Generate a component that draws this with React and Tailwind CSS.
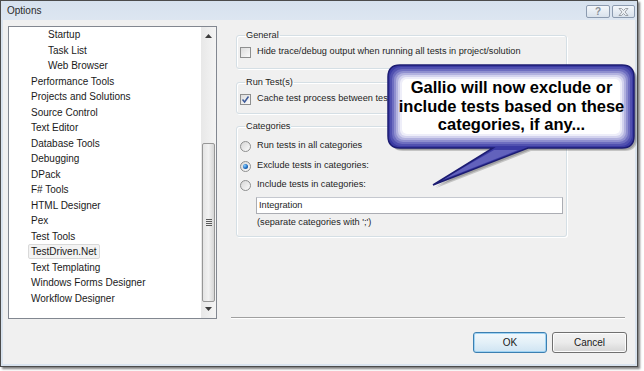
import React from 'react'

const treeItems = [
  { label: 'Startup', level: 2 },
  { label: 'Task List', level: 2 },
  { label: 'Web Browser', level: 2 },
  { label: 'Performance Tools', level: 1 },
  { label: 'Projects and Solutions', level: 1 },
  { label: 'Source Control', level: 1 },
  { label: 'Text Editor', level: 1 },
  { label: 'Database Tools', level: 1 },
  { label: 'Debugging', level: 1 },
  { label: 'DPack', level: 1 },
  { label: 'F# Tools', level: 1 },
  { label: 'HTML Designer', level: 1 },
  { label: 'Pex', level: 1 },
  { label: 'Test Tools', level: 1 },
  { label: 'TestDriven.Net', level: 1, selected: true },
  { label: 'Text Templating', level: 1 },
  { label: 'Windows Forms Designer', level: 1 },
  { label: 'Workflow Designer', level: 1 },
]

// inner glow rings of the callout, from the blue edge to the white middle
const glowRings = [
  { i: 2, c: '#5151b0' },
  { i: 4, c: '#6e6ec0' },
  { i: 6, c: '#8f8fcf' },
  { i: 8, c: '#b2b2df' },
  { i: 10, c: '#d3d3ee' },
  { i: 12, c: '#eeeef9' },
  { i: 14, c: '#ffffff' },
]

function Checkbox({ checked }) {
  return (
    <div className="w-[11px] h-[11px] border border-[#8e8f8f] bg-gradient-to-br from-[#dcdcdc] to-[#fbfbfb] flex items-center justify-center shrink-0">
      {checked && (
        <svg width="9" height="9" viewBox="0 0 9 9">
          <path d="M1.5 4.5 L3.6 7 L7.5 1.5" fill="none" stroke="#3c5a9a" strokeWidth="1.5" />
        </svg>
      )}
    </div>
  )
}

function Radio({ checked }) {
  return (
    <div className="w-[11px] h-[11px] rounded-full border border-[#8e8f8f] bg-gradient-to-br from-[#d6d6d6] to-[#fcfcfc] flex items-center justify-center shrink-0">
      {checked && (
        <div className="w-[5px] h-[5px] rounded-full bg-[radial-gradient(circle_at_35%_35%,#8ad0ff_0%,#1c6ac0_55%,#0f3f7e_100%)]" />
      )}
    </div>
  )
}

function Group({ title, className, children }) {
  return (
    <fieldset className={`border border-[#d5dfe5] rounded-[3px] shadow-[inset_1px_1px_0_#ffffff,1px_1px_0_#ffffff] ${className}`}>
      <legend className="ml-[5px] px-[1px] text-[9.2px] leading-[12px] text-[#1e1e1e]">{title}</legend>
      {children}
    </fieldset>
  )
}

function Callout() {
  const d = 'M20 5 H242 Q254 5 254 17 V76 Q254 88 242 88 H148 L53 125 L113 88 H20 Q8 88 8 76 V17 Q8 5 20 5 Z'
  return (
    <div className="absolute left-[380px] top-[60px] w-[264px] h-[135px]">
      <svg width="264" height="135" viewBox="0 0 264 135" className="absolute left-0 top-0">
        <path d={d} transform="translate(3 3)" fill="#000000" opacity="0.18" />
        <path d={d} transform="translate(2 2)" fill="#000000" opacity="0.18" />
        <path d={d} fill="#3b3ba4" />
        {glowRings.map(({ i, c }) => (
          <rect
            key={i}
            x={8 + i}
            y={5 + i}
            width={246 - 2 * i}
            height={83 - 2 * i}
            rx={Math.max(12 - i / 2, 3)}
            fill={c}
          />
        ))}
        <path d="M62 120 L114 90 L138 90 Z" fill="#6262bc" />
        <path d={d} fill="none" stroke="#1c1c72" strokeWidth="1.5" />
      </svg>
      <div className="absolute left-[8px] top-[18px] w-[247px] text-center font-bold text-[16.5px] leading-[18.5px] text-black">
        <div>Gallio will now exclude or</div>
        <div>include tests based on these</div>
        <div>categories, if any...</div>
      </div>
    </div>
  )
}

export default function App() {
  return (
    <div className="relative w-[644px] h-[371px] bg-white overflow-hidden font-['Liberation_Sans',Arial,sans-serif]">
      {/* dialog window */}
      <div className="w-[638px] h-[367px] flex flex-col border border-[#4b4b4b] bg-[#d9e3ee] shadow-[2px_2px_2px_rgba(0,0,0,0.5)]">
        {/* title bar */}
        <div className="h-[19px] flex items-center pl-[6px] pr-[2px] bg-gradient-to-b from-[#d6e1ee] to-[#dde6f1]">
          <span className="text-[10px] text-[#2a2a2a]">Options</span>
          <div className="ml-auto flex gap-[2px] self-start mt-[4px]">
            <div className="w-[24px] h-[13px] border border-[#8c9bb0] rounded-[2px] bg-gradient-to-b from-[#f4f7fb] to-[#d9e2ec] flex items-center justify-center text-[10px] leading-none font-bold text-[#8a8f96]">?</div>
            <div className="w-[23px] h-[13px] border border-[#8c9bb0] rounded-[2px] bg-gradient-to-b from-[#f4f7fb] to-[#d9e2ec] flex items-center justify-center">
              <svg width="11" height="8" viewBox="0 0 11 8">
                <path d="M1 0.5 H3.5 L5.5 2.5 L7.5 0.5 H10 L7 4 L10 7.5 H7.5 L5.5 5.5 L3.5 7.5 H1 L4 4 Z" fill="#eef2f6" stroke="#8a8f96" strokeWidth="0.8" />
              </svg>
            </div>
          </div>
        </div>

        {/* client area */}
        <div className="flex-1 mx-[2px] mb-[2px] bg-[#f0f0f0] flex">
          {/* tree list */}
          <div className="ml-[5px] mt-[6px] w-[209px] h-[293px] border border-[#828790] bg-white flex">
            <div className="flex-1 text-[10px] text-[#1a1a1a]">
              {treeItems.map((item) => (
                <div
                  key={item.label}
                  className={`h-[15.5px] flex items-center ${item.level === 2 ? 'pl-[36px]' : 'pl-[19px]'}`}
                >
                  <span
                    className={`px-[2px] h-[15px] flex items-center border rounded-[2px] whitespace-nowrap ${
                      item.selected ? 'border-[#d9d9d9] bg-[#f3f3f3]' : 'border-transparent'
                    }`}
                  >
                    {item.label}
                  </span>
                </div>
              ))}
            </div>
            {/* scrollbar */}
            <div className="w-[15px] bg-gradient-to-r from-[#e8e8e8] to-[#f4f4f4] flex flex-col items-center">
              <div className="h-[17px] flex items-center justify-center">
                <svg width="7" height="4" viewBox="0 0 7 4"><path d="M3.5 0 L7 4 H0 Z" fill="#3c3c3c" /></svg>
              </div>
              <div className="mt-[99px] w-[13px] h-[159px] border border-[#979797] rounded-[2px] bg-gradient-to-r from-[#e4e4e4] via-[#f2f2f2] to-[#d6d6d6] flex items-center justify-center">
                <div className="flex flex-col gap-[1px]">
                  <div className="w-[6px] h-[1px] bg-[#5a5a5a]" />
                  <div className="w-[6px] h-[1px] bg-[#5a5a5a]" />
                  <div className="w-[6px] h-[1px] bg-[#5a5a5a]" />
                  <div className="w-[6px] h-[1px] bg-[#5a5a5a]" />
                </div>
              </div>
              <div className="mt-[5px] flex items-center justify-center">
                <svg width="7" height="4" viewBox="0 0 7 4"><path d="M0 0 H7 L3.5 4 Z" fill="#3c3c3c" /></svg>
              </div>
            </div>
          </div>

          {/* options page */}
          <div className="ml-[14px] w-[396px] flex flex-col text-[9.2px] text-[#1e1e1e]">
            <div className="ml-[5px] w-[331px] flex flex-col">
              <Group title="General" className="mt-[9px] pl-[3px] pt-[5px] pb-[10px]">
                <div className="h-[12px] flex items-center gap-[6px]">
                  <Checkbox />
                  <span className="whitespace-nowrap">Hide trace/debug output when running all tests in project/solution</span>
                </div>
              </Group>
              <Group title="Run Test(s)" className="mt-[7px] pl-[3px] pt-[5px] pb-[8px]">
                <div className="h-[12px] flex items-center gap-[6px]">
                  <Checkbox checked />
                  <span className="whitespace-nowrap">Cache test process between test runs</span>
                </div>
              </Group>
              <Group title="Categories" className="mt-[6px] pl-[3px] pr-[3px] pt-[8px] pb-[7px]">
                <div className="h-[12px] flex items-center gap-[6px]">
                  <Radio />
                  <span>Run tests in all categories</span>
                </div>
                <div className="mt-[8px] h-[12px] flex items-center gap-[6px]">
                  <Radio checked />
                  <span>Exclude tests in categories:</span>
                </div>
                <div className="mt-[7px] h-[12px] flex items-center gap-[6px]">
                  <Radio />
                  <span>Include tests in categories:</span>
                </div>
                <div className="mt-[6px] ml-[16px] h-[17px] border border-[#abadb3] border-t-[#c5c8cf] bg-white flex items-center pl-[2px]">
                  Integration
                </div>
                <div className="mt-[3px] ml-[17px] h-[12px] flex items-center">(separate categories with &apos;;&apos;)</div>
              </Group>
            </div>

            <div className="mt-auto w-[394px] h-[1px] bg-[#a0a0a0] border-b border-white box-content" />
            <div className="mt-[13px] mb-[11px] flex justify-end gap-[5px] text-[10px] text-[#1a1a1a]">
              <button className="w-[74px] h-[21px] rounded-[3px] border border-[#3c7fb1] bg-gradient-to-b from-[#f2f8fc] via-[#e3f0f8] to-[#cfe4f3] shadow-[inset_0_0_0_1px_#9fd3f3]">OK</button>
              <button className="w-[75px] h-[21px] rounded-[3px] border border-[#707070] bg-gradient-to-b from-[#f2f2f2] via-[#ebebeb] to-[#d5d5d5] shadow-[inset_0_0_0_1px_#fcfcfc]">Cancel</button>
            </div>
          </div>
        </div>
      </div>

      <Callout />
    </div>
  )
}
